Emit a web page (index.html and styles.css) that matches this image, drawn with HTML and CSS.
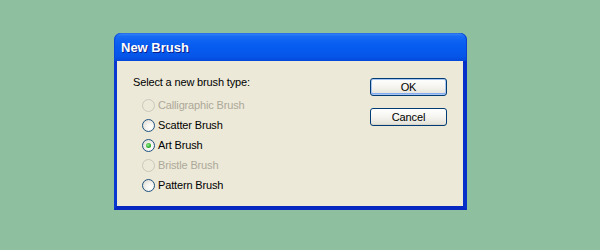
FILE: index.html
```html
<!DOCTYPE html>
<html>
<head>
<meta charset="utf-8">
<link rel="stylesheet" href="styles.css">
</head>
<body>
<div class="dialog">
  <div class="titlebar"><span class="title">New Brush</span></div>
  <div class="body">
    <div class="options">
      <div class="prompt">Select a new brush type:</div>
      <div class="radios">
        <div class="row disabled"><span class="radio"></span><span class="label">Calligraphic Brush</span></div>
        <div class="row"><span class="radio"></span><span class="label">Scatter Brush</span></div>
        <div class="row"><span class="radio checked"></span><span class="label">Art Brush</span></div>
        <div class="row disabled"><span class="radio"></span><span class="label">Bristle Brush</span></div>
        <div class="row"><span class="radio"></span><span class="label">Pattern Brush</span></div>
      </div>
    </div>
    <div class="buttons">
      <div class="btn default">OK</div>
      <div class="btn">Cancel</div>
    </div>
  </div>
</div>
</body>
</html>
```
FILE: styles.css
```css
html, body {
  margin: 0;
  padding: 0;
}
body {
  background: #8ebf9f;
  width: 600px;
  height: 250px;
  padding: 33px 0 0 114px;
  box-sizing: border-box;
  font-family: "Liberation Sans", Arial, sans-serif;
}
.dialog {
  width: 353px;
  height: 177px;
  display: flex;
  flex-direction: column;
}
.titlebar {
  height: 28px;
  flex: none;
  border-radius: 7px 7px 0 0;
  background: linear-gradient(#3d8dfb 0, #1a6cf4 3px, #0d62f2 8px, #075cf0 50%, #0555e8 85%, #0348d8 100%);
  box-shadow: inset 1px 0 0 #0a4ad8, inset -1px 0 0 #0a3fcf, inset 0 1px 0 #2a6fe8;
  display: flex;
  align-items: center;
  padding-left: 7px;
  box-sizing: border-box;
}
.title {
  color: #fff;
  font-weight: bold;
  font-size: 13px;
  text-shadow: 1px 1px 0 #0a1e8c;
  margin-top: 1px;
}
.body {
  flex: 1;
  background: #ece9d8;
  border-left: 3px solid #0838d0;
  border-right: 4px solid #0630c8;
  border-bottom: 4px solid #0628c0;
  display: flex;
  justify-content: space-between;
  padding: 15px 16px 0 16px;
  font-size: 11px;
  letter-spacing: -0.15px;
  color: #000;
}
.prompt {
  line-height: 13px;
  height: 13px;
}
.radios {
  margin-top: 6px;
  padding-left: 9px;
}
.row {
  height: 20px;
  display: flex;
  align-items: center;
}
.radio {
  width: 13px;
  height: 13px;
  box-sizing: border-box;
  border-radius: 50%;
  border: 1px solid #1c5180;
  background: radial-gradient(circle at 65% 65%, #ffffff 0, #f4f3ee 40%, #d6d3c8 100%);
  margin-right: 3px;
  position: relative;
  flex: none;
}
.radio.checked::after {
  content: "";
  position: absolute;
  left: 3px;
  top: 3px;
  width: 5px;
  height: 5px;
  border-radius: 50%;
  background: radial-gradient(circle at 40% 40%, #8ef08a 0, #21a121 70%, #1a8a1a 100%);
}
.disabled .radio {
  border-color: #cac8bb;
  background: #ece9d8;
}
.disabled .label {
  color: #aca899;
}
.label {
  line-height: 13px;
}
.buttons {
  display: flex;
  flex-direction: column;
  gap: 12px;
  padding-top: 2px;
}
.btn {
  width: 77px;
  height: 18px;
  box-sizing: border-box;
  border: 1px solid #003c74;
  border-radius: 3px;
  background: linear-gradient(#ffffff 0, #f5f4ef 50%, #e6e4dc 90%, #d6d0c5 100%);
  display: flex;
  align-items: center;
  justify-content: center;
  font-size: 11px;
}
.btn.default {
  box-shadow: inset 0 0 0 1px #a9c5f2, inset 0 -1px 0 1px #85aaf0;
}
```
